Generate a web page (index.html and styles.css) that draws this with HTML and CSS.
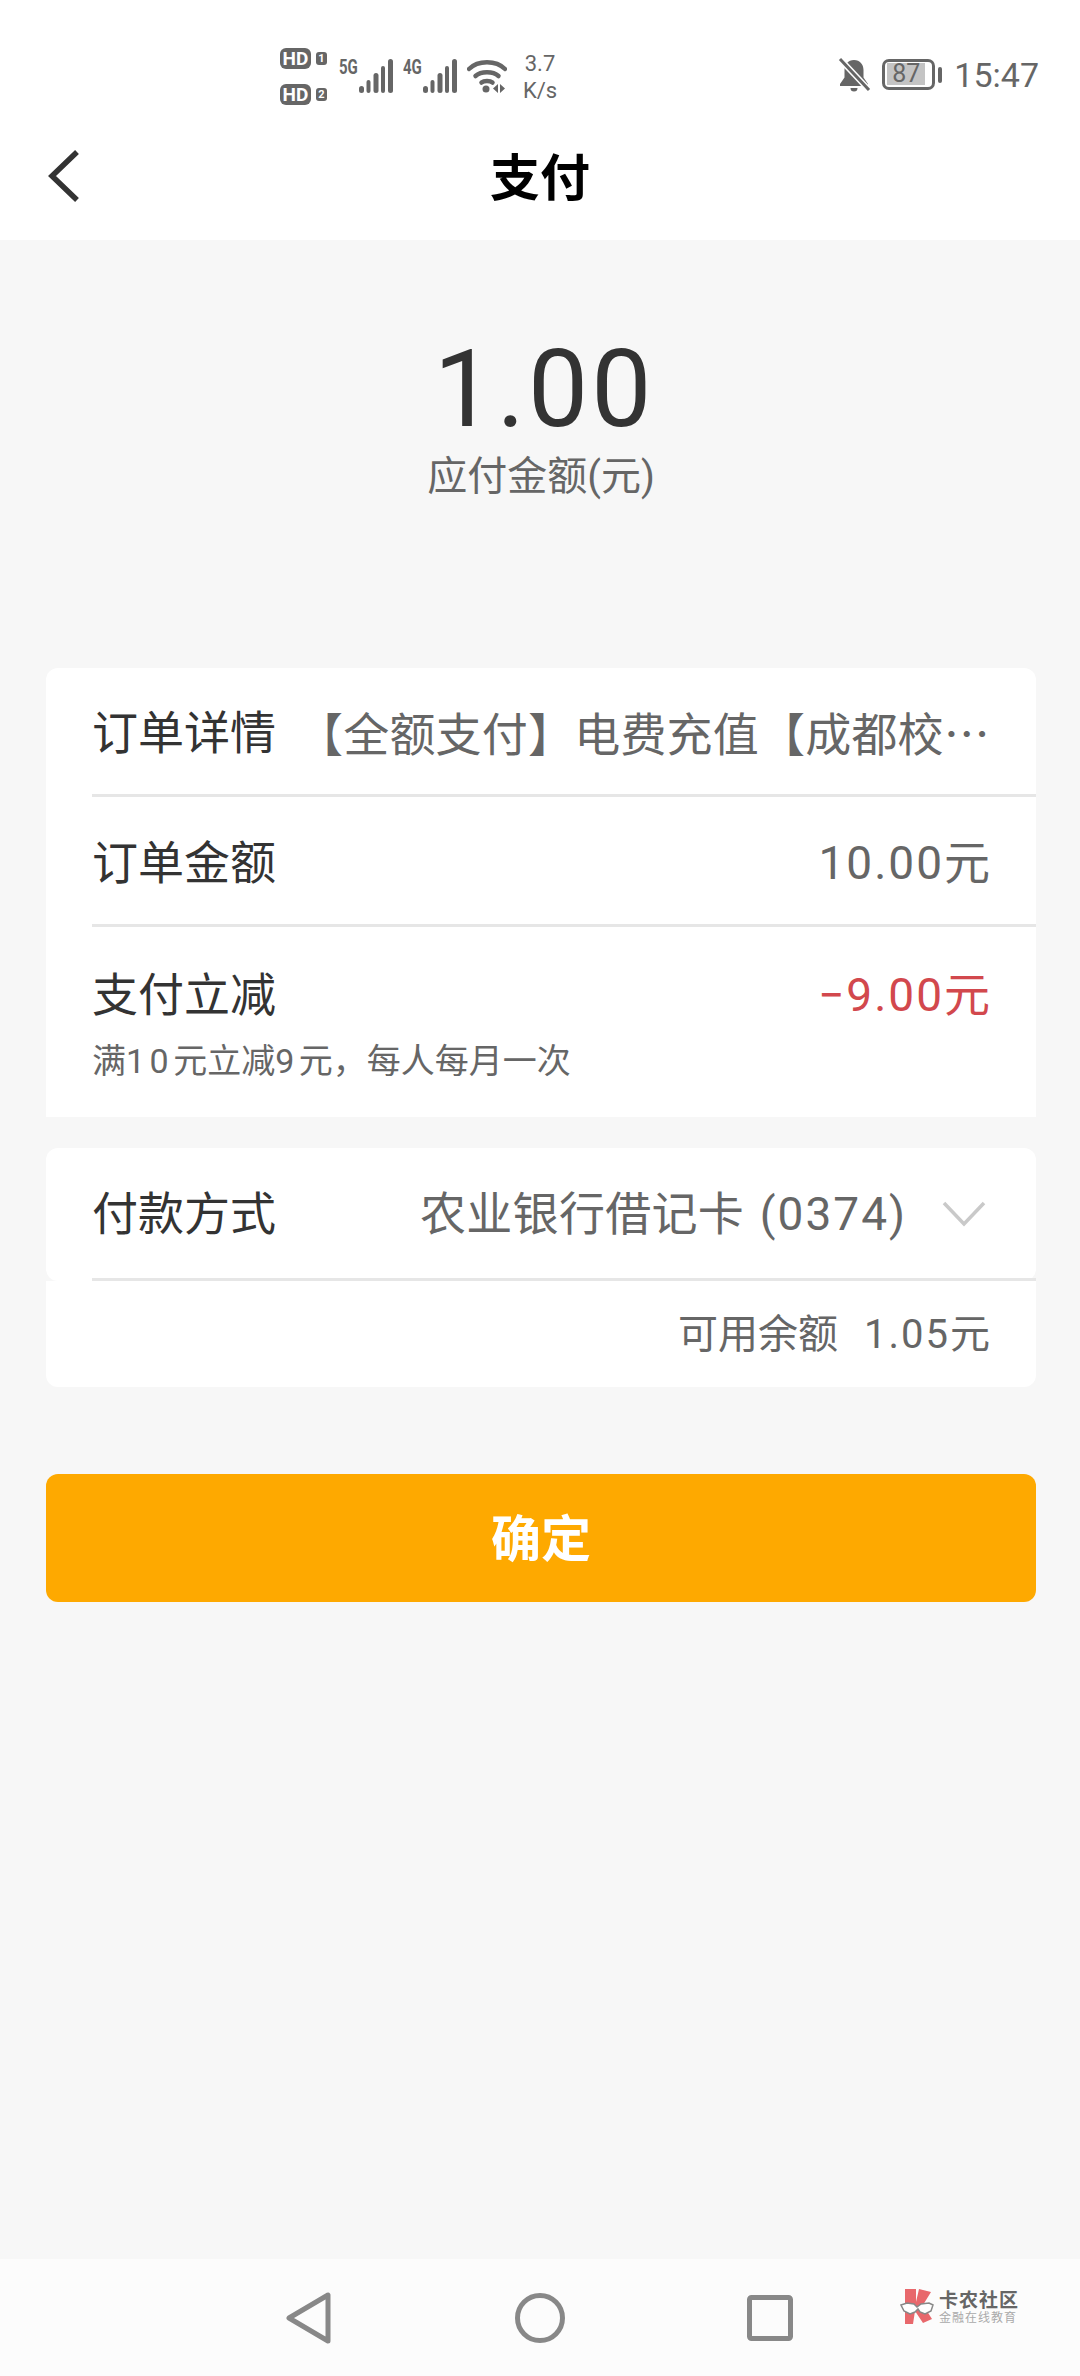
FILE: index.html
```html
<!DOCTYPE html>
<html lang="zh-CN">
<head>
  <meta charset="UTF-8">
  <meta name="viewport" content="width=device-width, initial-scale=1.0">
  <title>支付</title>
  <link rel="stylesheet" href="styles.css">
</head>
<body>
  <header class="top">
    <div class="status">
      <div class="sims">
        <div class="sim"><span class="hd">HD</span><span class="slot">1</span></div>
        <div class="sim"><span class="hd">HD</span><span class="slot">2</span></div>
      </div>
      <div class="net">
        <span class="net-name">5G</span>
        <svg class="bars" width="34" height="34" viewBox="0 0 34 34"><g fill="#666"><rect x="0" y="27" width="5" height="7" rx="2.5"/><rect x="7.500" y="21" width="4" height="13" rx="2"/><rect x="14.500" y="14" width="5" height="20" rx="2.5"/><rect x="22" y="7" width="4" height="27" rx="2"/><rect x="29" y="0" width="5" height="34" rx="2.5"/></g></svg>
      </div>
      <div class="net">
        <span class="net-name">4G</span>
        <svg class="bars" width="34" height="34" viewBox="0 0 34 34"><g fill="#666"><rect x="0" y="27" width="5" height="7" rx="2.5"/><rect x="7.500" y="21" width="4" height="13" rx="2"/><rect x="14.500" y="14" width="5" height="20" rx="2.5"/><rect x="22" y="7" width="4" height="27" rx="2"/><rect x="29" y="0" width="5" height="34" rx="2.5"/></g></svg>
      </div>
      <svg class="wifi" width="40" height="36" viewBox="0 0 40 36">
        <g fill="none" stroke="#666" stroke-width="4.5" stroke-linecap="round">
          <path d="M2 11C11 2 29 2 38 11"/>
          <path d="M8.5 18C14 13 26 13 31.500 18"/>
          <path d="M14.500 24.500C17 22.500 23 22.500 25.500 24.500"/>
        </g>
        <circle cx="19" cy="31" r="3.500" fill="#666"/>
        <path d="M31 26v9l-5-4.500zM33 26l5 4.500-5 4.500z" fill="#666"/>
      </svg>
      <div class="speed"><span>3.7</span><span>K/s</span></div>
      <svg class="bell" width="34" height="36" viewBox="0 0 34 36">
        <path d="M17 3c-6 0-9.500 4.500-9.500 10v7.500L3 27v2h28v-2l-4.500-6.500V13C26.500 7.500 23 3 17 3z" fill="#666"/>
        <path d="M13.500 31h7a3.500 3.500 0 0 1-7 0z" fill="#666"/>
        <path d="M2 1l30 32" stroke="#fff" stroke-width="6"/>
        <path d="M3 2l29 31" stroke="#666" stroke-width="3"/>
      </svg>
      <div class="battery"><div class="battery-body"><span class="battery-level">87</span></div><div class="battery-nub"></div></div>
      <span class="clock">15:47</span>
    </div>
    <div class="titlebar">
      <svg class="back" width="34" height="52" viewBox="0 0 34 52"><path d="M30 2L5 26l25 24" fill="none" stroke="#333" stroke-width="5.500"/></svg>
      <h1 class="title">支付</h1>
    </div>
  </header>

  <main class="content">
    <section class="summary">
      <div class="amount">1.00</div>
      <div class="amount-label">应付金额(元)</div>
    </section>

    <section class="card card-order">
      <div class="row row-line">
        <span class="label">订单详情</span>
        <span class="value value-long">【全额支付】电费充值【成都校<span class="more">⋯</span></span>
      </div>
      <div class="row row-line">
        <span class="label">订单金额</span>
        <span class="value"><span class="num">10.00</span>元</span>
      </div>
      <div class="row row-discount">
        <div>
          <div class="label">支付立减</div>
          <div class="note">满<span class="num-small">10</span>元立减<span class="num-small">9</span>元，每人每月一次</div>
        </div>
        <span class="value value-red"><span class="num">−9.00</span>元</span>
      </div>
    </section>

    <section class="pay">
      <div class="pay-top">
        <div class="row row-line">
          <span class="label">付款方式</span>
          <span class="method">
            <span class="value value-card">农业银行借记卡 <span class="num">(0374)</span></span>
            <svg class="chevron" width="44" height="26" viewBox="0 0 44 26"><path d="M2 2l20 21L42 2" fill="none" stroke="#c9c9c9" stroke-width="3.500"/></svg>
          </span>
        </div>
      </div>
      <div class="balance"><span>可用余额</span><span><span class="num">1.05</span>元</span></div>
    </section>

    <button class="confirm">确定</button>
  </main>

  <footer class="navbar">
    <svg class="nav-back" width="46" height="52" viewBox="0 0 46 52"><path d="M3 26L42 3v46z" fill="none" stroke="#888" stroke-width="5" stroke-linejoin="round"/></svg>
    <svg class="nav-home" width="50" height="50" viewBox="0 0 50 50"><circle cx="25" cy="25" r="22.500" fill="none" stroke="#888" stroke-width="5"/></svg>
    <svg class="nav-recent" width="46" height="46" viewBox="0 0 46 46"><rect x="2.500" y="2.500" width="41" height="41" rx="2" fill="none" stroke="#888" stroke-width="5"/></svg>
    <div class="watermark">
      <svg width="34" height="36" viewBox="0 0 34 36">
        <path d="M5 1h11v13l3-13 12 3-8 13 9 14-9 4-8-12-2 13H5z" fill="#e8686c"/>
        <path d="M1 17l6-2 7 1 3 3 4-3 8-1 4 2-2 6-6 3-5-2-2-3-3 3-5 2-6-3z" fill="#fff" stroke="#888" stroke-width="1.500"/>
      </svg>
      <div class="watermark-text">
        <span class="wm-name">卡农社区</span>
        <span class="wm-sub">金融在线教育</span>
      </div>
    </div>
  </footer>
</body>
</html>
```

FILE: styles.css
```css
* {
  box-sizing: border-box;
  margin: 0;
  padding: 0;
}

html, body {
  width: 1080px;
  height: 2376px;
}

body {
  display: flex;
  flex-direction: column;
  background: #f7f7f7;
  color: #333;
  font-family: Roboto, "Noto Sans CJK SC", sans-serif;
  overflow: hidden;
}

/* status bar + title */
.top {
  height: 240px;
  background: #fff;
}

.status {
  height: 118px;
  padding: 22px 41px 0 280px;
  display: flex;
  align-items: center;
  color: #666;
}

.sims {
  display: flex;
  flex-direction: column;
  gap: 15px;
  padding-top: 12px;
}

.sim {
  display: flex;
  align-items: center;
  gap: 5px;
}

.hd {
  width: 31px;
  height: 21px;
  border-radius: 6px;
  background: #666;
  color: #fff;
  font-size: 19px;
  font-weight: 700;
  line-height: 21px;
  text-align: center;
}

.slot {
  width: 11px;
  height: 13px;
  border-radius: 3px;
  background: #666;
  color: #fff;
  font-size: 11px;
  font-weight: 700;
  line-height: 13px;
  text-align: center;
}

.net {
  display: flex;
  align-items: flex-start;
  margin-left: 12px;
  padding-top: 11px;
}

.net + .net {
  margin-left: 10px;
}

.net-name {
  width: 20px;
  font-size: 20px;
  font-weight: 700;
  line-height: 16px;
  transform: scaleX(0.75);
  transform-origin: left;
}

.wifi {
  margin: 11px 0 0 10px;
}

.speed {
  width: 36px;
  margin: 14px 0 0 15px;
  display: flex;
  flex-direction: column;
  align-items: center;
  font-size: 22px;
  line-height: 27px;
}

.bell {
  margin: 9px 0 0 auto;
}

.battery {
  display: flex;
  align-items: center;
  gap: 3px;
  margin: 9px 0 0 11px;
}

.battery-body {
  width: 53px;
  height: 31px;
  padding: 1px 0 0 2px;
  border: 3px solid #666;
  border-radius: 7px;
}

.battery-level {
  display: block;
  width: 38px;
  height: 22px;
  background: #c4c4c4;
  font-size: 25px;
  line-height: 22px;
  text-align: center;
}

.battery-nub {
  width: 4px;
  height: 16px;
  border-radius: 2px;
  background: #666;
}

.clock {
  margin: 9px 0 0 12px;
  font-size: 34px;
}

.titlebar {
  position: relative;
  height: 122px;
  display: flex;
  align-items: center;
  justify-content: center;
}

.back {
  position: absolute;
  left: 47px;
  top: 32px;
}

.title {
  color: #000;
  font-size: 50px;
  font-weight: 700;
  line-height: 60px;
}

/* body */
.content {
  flex: 1;
  padding: 0 44px 0 46px;
}

.summary {
  height: 428px;
  padding-top: 93px;
  text-align: center;
}

.amount {
  padding-left: 6px;
  font-size: 107px;
  letter-spacing: 3px;
  line-height: 114px;
}

.amount-label {
  margin-top: 2px;
  color: #666;
  font-size: 40px;
  line-height: 56px;
}

.card {
  background: #fff;
  border-radius: 12px 12px 0 0;
}

.row {
  display: flex;
  align-items: center;
  justify-content: space-between;
  margin-left: 46px;
  padding-right: 46px;
  white-space: nowrap;
}

.row-line {
  height: 130px;
  padding-top: 4px;
  border-bottom: 3px solid #e6e6e6;
}

.card-order .row-line:first-child {
  height: 129px;
}

.row-discount {
  height: 190px;
  align-items: flex-start;
  padding-top: 36px;
}

.label {
  color: #333;
  font-size: 46px;
  line-height: 64px;
}

.value {
  color: #666;
  font-size: 46px;
  line-height: 64px;
}

.value-long {
  letter-spacing: 0.2px;
}

.value-card {
  letter-spacing: 0.3px;
}

.value-card .num {
  margin-left: 4px;
}

.num {
  letter-spacing: 2px;
}

.num-small {
  letter-spacing: 4.5px;
}

.more {
  font-family: "Noto Sans CJK SC", sans-serif;
}

.value-red {
  color: #d2484d;
}

.note {
  margin-top: 9px;
  color: #666;
  font-size: 34px;
  line-height: 50px;
}

.pay {
  margin-top: 31px;
}

.pay-top {
  background: #fff;
  border-radius: 12px;
}

.pay-top .row-line {
  height: 133px;
  padding-top: 2px;
  padding-right: 0;
}

.method {
  display: flex;
  align-items: center;
  gap: 35px;
  padding-right: 50px;
}

.balance {
  height: 106px;
  padding: 0 46px 6px 0;
  display: flex;
  align-items: center;
  justify-content: flex-end;
  gap: 26px;
  background: #fff;
  border-radius: 0 0 12px 12px;
  color: #666;
  font-size: 40px;
}

.confirm {
  display: block;
  width: 100%;
  height: 128px;
  margin-top: 87px;
  padding-bottom: 6px;
  border: none;
  border-radius: 12px;
  background: #fea900;
  color: #fff;
  font-family: inherit;
  font-size: 50px;
  font-weight: 700;
}

/* nav */
.navbar {
  position: relative;
  height: 117px;
  display: flex;
  align-items: flex-start;
  background: #fcfcfc;
}

.nav-back {
  margin: 33px 0 0 286px;
}

.nav-home {
  margin: 34px 0 0 183px;
}

.nav-recent {
  margin: 36px 0 0 182px;
}

.watermark {
  position: absolute;
  left: 900px;
  top: 29px;
  display: flex;
  gap: 5px;
}

.watermark-text {
  display: flex;
  flex-direction: column;
  font-family: "Noto Sans CJK SC", sans-serif;
}

.wm-name {
  color: #666;
  font-size: 19px;
  font-weight: 700;
  line-height: 22px;
  letter-spacing: 1px;
}

.wm-sub {
  color: #aaa;
  font-size: 12px;
  line-height: 14px;
  letter-spacing: 1px;
}
```
